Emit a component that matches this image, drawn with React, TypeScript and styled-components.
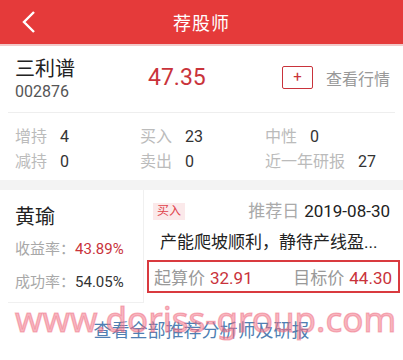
import styled, { createGlobalStyle } from 'styled-components'

const GlobalStyle = createGlobalStyle`
  html, body {
    margin: 0;
    padding: 0;
    background: #f3f3f3;
  }
  body {
    font-family: Roboto, "Noto Sans CJK SC", sans-serif;
    width: 403px;
    height: 360px;
    overflow: hidden;
  }
`

const red = '#c9333b'
const grey = '#999999'

const Page = styled.div`
  position: relative;
  width: 403px;
  height: 360px;
  overflow: hidden;
  background: #f3f3f3;
`

const Header = styled.div`
  height: 44px;
  background: #e53a3a;
  border-bottom: 2px solid #f1c9c9;
  display: flex;
  align-items: center;
  justify-content: center;
  position: relative;
`

const BackButton = styled.div`
  position: absolute;
  left: 22px;
  top: 9px;
  width: 20px;
  height: 26px;
  display: flex;
  align-items: center;
`

const Title = styled.div`
  color: #fff;
  font-size: 18px;
  letter-spacing: 1px;
`

const StockPanel = styled.div`
  background: #fff;
  padding: 0 15px;
  height: 134px;
  display: flex;
  flex-direction: column;
`

const StockTop = styled.div`
  display: flex;
  align-items: center;
  height: 66px;
  border-bottom: 1px solid #eeeeee;
  margin: 0 -7px;
  padding: 0 7px;
  white-space: nowrap;
`

const StockName = styled.div`
  display: flex;
  flex-direction: column;
  gap: 1px;
  width: 133px;
  flex-shrink: 0;
`

const NameText = styled.div`
  font-size: 20px;
  line-height: 24px;
  color: #222;
`

const CodeText = styled.div`
  font-size: 16px;
  line-height: 19px;
  color: #555;
`

const Price = styled.div`
  font-size: 23px;
  color: ${red};
  width: 134px;
  flex-shrink: 0;
  padding-bottom: 3px;
`

const PlusBox = styled.div`
  width: 29px;
  height: 21px;
  flex-shrink: 0;
  border: 1px solid ${red};
  border-radius: 2px;
  color: ${red};
  font-size: 15px;
  line-height: 20px;
  text-align: center;
  margin-right: 13px;
  margin-bottom: 3px;
`

const QuoteLink = styled.div`
  font-size: 16px;
  color: ${grey};
  margin-bottom: 3px;
`

const StatGrid = styled.div`
  display: grid;
  grid-template-columns: 125px 125px 1fr;
  row-gap: 4px;
  padding-top: 13px;
`

const Stat = styled.div`
  display: flex;
  gap: 13px;
  font-size: 16px;
  line-height: 21px;
`

const StatLabel = styled.span`
  color: #bbbbbb;
`

const StatValue = styled.span`
  color: #333;
`

const Band = styled.div`
  height: 10px;
`

const AnalystCard = styled.div`
  background: #fff;
  height: 170px;
  display: flex;
  flex-direction: column;
`

const CardBody = styled.div`
  display: flex;
  height: 113px;
`

const LeftCol = styled.div`
  width: 128px;
  margin-left: 8px;
  padding-left: 7px;
  border-right: 1px solid #f0f0f0;
  border-bottom: 1px solid #f0f0f0;
  display: flex;
  flex-direction: column;
`

const AnalystName = styled.div`
  font-size: 20px;
  color: #222;
  margin-top: 15px;
  line-height: 24px;
`

const Rate = styled.div`
  font-size: 15px;
  color: #a8a8a8;
  margin-top: 9px;
  line-height: 22px;

  & + & {
    margin-top: 11px;
  }
`

const RateValue = styled.span<{ $red?: boolean }>`
  color: ${(p) => (p.$red ? red : '#333')};
`

const RightCol = styled.div`
  flex: 1;
  display: flex;
  flex-direction: column;
  padding: 10px 13px 0 9px;
`

const TopLine = styled.div`
  display: flex;
  justify-content: space-between;
  align-items: center;
`

const Tag = styled.span`
  background: #fbe9ea;
  color: #e0424a;
  font-size: 12px;
  line-height: 17px;
  padding: 0 4px;
`

const DateText = styled.div`
  font-size: 17px;
  color: #222;
  line-height: 22px;
`

const DateLabel = styled.span`
  color: #aaa;
  margin-right: 5px;
`

const Summary = styled.div`
  font-size: 17px;
  color: #222;
  line-height: 22px;
  margin-top: 9px;
  padding-left: 7px;
  white-space: nowrap;
`

const PriceBox = styled.div`
  margin: 7px -10px 0 -6px;
  height: 29px;
  border: 2px solid #d93a3f;
  display: flex;
  justify-content: space-between;
  align-items: center;
  padding: 0 6px 0 5px;
  font-size: 17px;
`

const PriceItem = styled.span`
  color: ${grey};
`

const PriceValue = styled.span`
  color: ${red};
  margin-left: 5px;
`

const MoreLink = styled.div`
  flex: 1;
  display: flex;
  align-items: center;
  justify-content: center;
  color: #4f7fb3;
  font-size: 18px;
  padding-bottom: 6px;
`

const Watermark = styled.div`
  position: absolute;
  left: 15px;
  top: 301px;
  font-family: "Noto Sans", sans-serif;
  font-size: 35px;
  line-height: 35px;
  -webkit-text-stroke: 1.2px rgba(240, 110, 130, 0.5);
  color: rgba(240, 110, 130, 0.5);
  white-space: nowrap;
  pointer-events: none;
`

export default function App() {
  return (
    <Page>
      <GlobalStyle />
      <Header>
        <BackButton>
          <svg width="14" height="24" viewBox="0 0 14 24">
            <path d="M12 2 L2 12 L12 22" stroke="#fff" strokeWidth="2.4" fill="none" />
          </svg>
        </BackButton>
        <Title>荐股师</Title>
      </Header>

      <StockPanel>
        <StockTop>
          <StockName>
            <NameText>三利谱</NameText>
            <CodeText>002876</CodeText>
          </StockName>
          <Price>47.35</Price>
          <PlusBox>+</PlusBox>
          <QuoteLink>查看行情</QuoteLink>
        </StockTop>
        <StatGrid>
          <Stat>
            <StatLabel>增持</StatLabel>
            <StatValue>4</StatValue>
          </Stat>
          <Stat>
            <StatLabel>买入</StatLabel>
            <StatValue>23</StatValue>
          </Stat>
          <Stat>
            <StatLabel>中性</StatLabel>
            <StatValue>0</StatValue>
          </Stat>
          <Stat>
            <StatLabel>减持</StatLabel>
            <StatValue>0</StatValue>
          </Stat>
          <Stat>
            <StatLabel>卖出</StatLabel>
            <StatValue>0</StatValue>
          </Stat>
          <Stat>
            <StatLabel>近一年研报</StatLabel>
            <StatValue>27</StatValue>
          </Stat>
        </StatGrid>
      </StockPanel>

      <Band />

      <AnalystCard>
        <CardBody>
          <LeftCol>
            <AnalystName>黄瑜</AnalystName>
            <Rate>
              收益率：<RateValue $red>43.89%</RateValue>
            </Rate>
            <Rate>
              成功率：<RateValue>54.05%</RateValue>
            </Rate>
          </LeftCol>
          <RightCol>
            <TopLine>
              <Tag>买入</Tag>
              <DateText>
                <DateLabel>推荐日</DateLabel>2019-08-30
              </DateText>
            </TopLine>
            <Summary>产能爬坡顺利，静待产线盈...</Summary>
            <PriceBox>
              <PriceItem>
                起算价<PriceValue>32.91</PriceValue>
              </PriceItem>
              <PriceItem>
                目标价<PriceValue>44.30</PriceValue>
              </PriceItem>
            </PriceBox>
          </RightCol>
        </CardBody>
        <MoreLink>查看全部推荐分析师及研报</MoreLink>
      </AnalystCard>

      <Watermark>www.doriss-group.com</Watermark>
    </Page>
  )
}
